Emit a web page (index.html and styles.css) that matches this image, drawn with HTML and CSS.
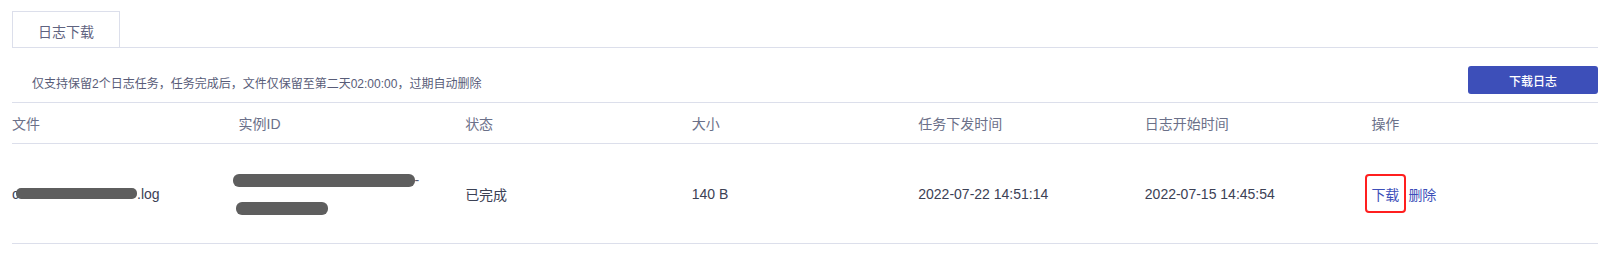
FILE: index.html
```html
<!DOCTYPE html>
<html lang="zh-CN">
<head>
<meta charset="utf-8">
<title>日志下载</title>
<link rel="stylesheet" href="styles.css">
</head>
<body>
<div class="page">
  <div class="tabs">
    <div class="tab">日志下载</div>
  </div>
  <div class="toolbar">
    <p class="notice">仅支持保留2个日志任务，任务完成后，文件仅保留至第二天02:00:00，过期自动删除</p>
    <button class="btn-primary" type="button">下载日志</button>
  </div>
  <table class="log-table">
    <thead>
      <tr>
        <th>文件</th>
        <th>实例ID</th>
        <th>状态</th>
        <th>大小</th>
        <th>任务下发时间</th>
        <th>日志开始时间</th>
        <th>操作</th>
      </tr>
    </thead>
    <tbody>
      <tr>
        <td><span class="file-name">c<span class="redact redact-file"></span>.log</span></td>
        <td>
          <div class="id-line"><span class="redact redact-id1"></span>-</div>
          <div class="id-line"><span class="redact redact-id2"></span></div>
        </td>
        <td>已完成</td>
        <td>140 B</td>
        <td>2022-07-22 14:51:14</td>
        <td>2022-07-15 14:45:54</td>
        <td>
          <div class="actions">
            <a class="link highlighted" href="#">下载<span class="annot"></span></a>
            <a class="link" href="#">删除</a>
          </div>
        </td>
      </tr>
    </tbody>
  </table>
</div>
</body>
</html>
```
FILE: styles.css
```css
* { box-sizing: border-box; }
html, body { margin: 0; padding: 0; background: #ffffff; }
body {
  font-family: "Liberation Sans", "Noto Sans CJK SC", sans-serif;
  font-size: 14px;
  color: #3c4155;
}
.page {
  padding: 11px 17px 0 12px;
}
.tabs {
  display: flex;
  border-bottom: 1px solid #dcdfeb;
}
.tab {
  width: 108px;
  height: 36px;
  border: 1px solid #dcdfeb;
  border-bottom: none;
  display: flex;
  align-items: center;
  justify-content: center;
  padding-top: 2px;
  font-size: 14px;
  color: #5f6380;
}
.toolbar {
  display: flex;
  align-items: center;
  justify-content: space-between;
  padding-top: 18px;
  margin-bottom: 8px;
}
.notice {
  margin: 0;
  padding: 4px 0 0 20px;
  font-size: 12px;
  color: #585c78;
}
.btn-primary {
  width: 130px;
  height: 28px;
  border: none;
  border-radius: 3px;
  background: #3d4fb9;
  color: #ffffff;
  font-family: "Noto Sans CJK SC", sans-serif;
  font-size: 12px;
  font-weight: 500;
  padding: 0;
}
.log-table {
  width: 100%;
  table-layout: fixed;
  border-collapse: collapse;
}
.log-table th {
  height: 41px;
  padding: 0;
  text-align: left;
  font-weight: normal;
  color: #6b7089;
  border-top: 1px solid #dcdfeb;
  border-bottom: 1px solid #dcdfeb;
  vertical-align: middle;
}
.log-table td {
  height: 100px;
  padding: 0;
  text-align: left;
  vertical-align: middle;
  border-bottom: 1px solid #dcdfeb;
  color: #3c4155;
}
.file-name { white-space: nowrap; }
.redact {
  display: inline-block;
  background: #5e5e5e;
  border-radius: 6px;
  vertical-align: middle;
}
.redact-file {
  width: 121px;
  height: 11px;
  margin-left: -3px;
  border-radius: 5px;
  position: relative;
  top: -1px;
}
.id-line {
  height: 28px;
  line-height: 28px;
  white-space: nowrap;
  color: #555a70;
}
.redact-id1 { width: 182px; height: 13px; margin-left: -6px; }
.redact-id2 { width: 92px; height: 13px; margin-left: -3px; }
.actions {
  display: flex;
  gap: 9px;
}
.link {
  color: #3d4fb9;
  text-decoration: none;
}
.highlighted { position: relative; }
.annot {
  position: absolute;
  left: -6px;
  right: -7px;
  top: -10px;
  bottom: -9px;
  border: 2px solid #ff1f1f;
  border-radius: 4px;
}
```
